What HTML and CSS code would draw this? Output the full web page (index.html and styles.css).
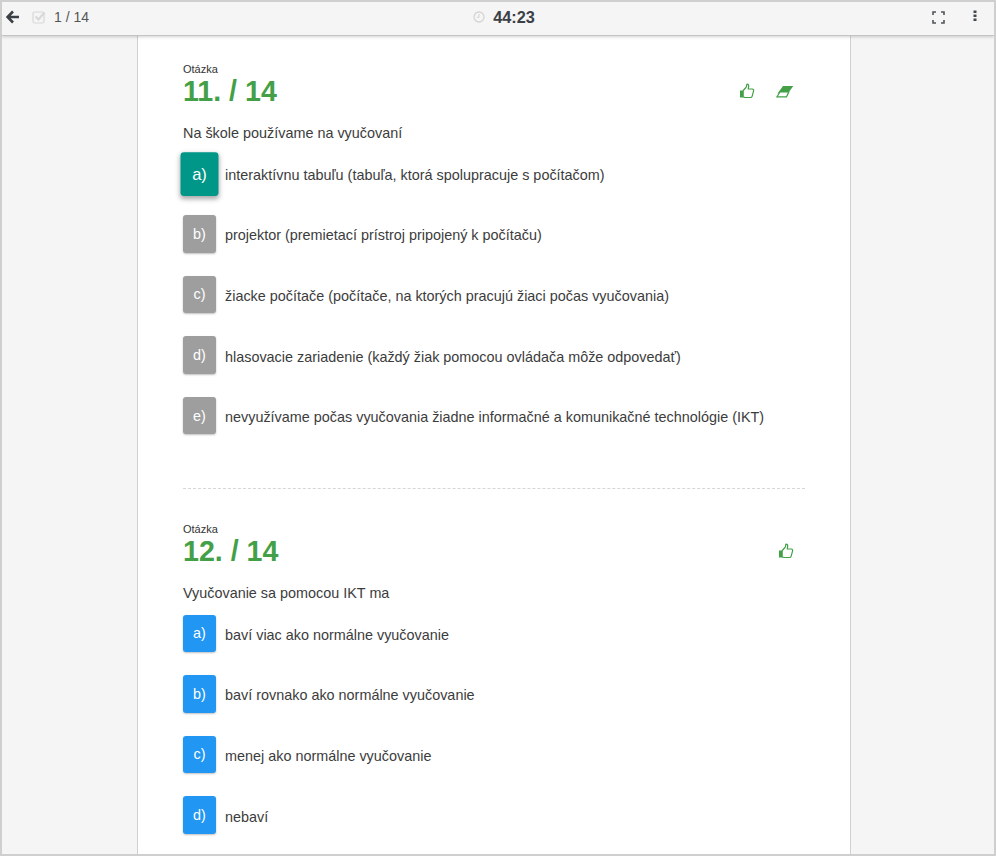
FILE: index.html
```html
<!DOCTYPE html>
<html lang="sk">
<head>
<meta charset="utf-8">
<title>Test</title>
<link rel="stylesheet" href="styles.css">
</head>
<body>
<div class="frame">
  <header class="toolbar">
    <div class="tb-left">
      <svg class="ic-back" viewBox="0 0 14 14" width="14" height="14"><path d="M7 1.500 1.500 7 7 12.500M2 7h11" fill="none" stroke="#3b3f46" stroke-width="2.600"/></svg>
      <svg class="ic-check" viewBox="0 0 14 14" width="14" height="14"><rect x="1" y="2" width="11" height="11" rx="1.500" fill="none" stroke="#d8d8d8" stroke-width="1.200"/><path d="M3.500 6.500 6.500 9.500 12.500 2.500" fill="none" stroke="#d8d8d8" stroke-width="2.200"/></svg>
      <span class="count">1 / 14</span>
    </div>
    <div class="tb-center">
      <svg class="ic-clock" viewBox="0 0 12 12" width="12" height="12"><circle cx="6" cy="6" r="5" fill="none" stroke="#d4d4d4" stroke-width="1.300"/><path d="M6 3v3.300H3.800" fill="none" stroke="#d4d4d4"/></svg>
      <span class="time">44:23</span>
    </div>
    <div class="tb-right">
      <svg class="ic-full" viewBox="0 0 13 13" width="13" height="13"><path d="M1 4V1h3M9 1h3v3M12 9v3H9M4 12H1V9" fill="none" stroke="#50555c" stroke-width="1.600"/></svg>
      <svg class="ic-more" viewBox="0 0 4 12" width="4" height="12"><path d="M.5.500h3v2.500h-3zM.5 4.500h3V7h-3zM.5 8.500h3V11h-3z" fill="#444950"/></svg>
    </div>
  </header>
  <div class="stage">
    <main class="sheet">
      <section class="question">
        <div class="q-head">
          <div>
            <div class="q-label">Otázka</div>
            <div class="q-num">11. / 14</div>
          </div>
          <div class="q-tools">
            <svg class="ic-thumb" viewBox="0 0 16 16" width="16" height="16"><path d="M1 7.500h3.200v7H1z" fill="#43a047"/><path d="M4.200 7.500 7 4.500c.7-1 .6-2.300.9-3.300.9-.3 2 .5 1.800 2L9.300 6h4c1 0 1.600 1 1.300 1.900l-1.500 5.400c-.2.700-.8 1.200-1.500 1.200H6.500c-.8 0-1.500-.3-2.300-.6z" fill="#fff" stroke="#43a047" stroke-width="1.200"/></svg>
            <svg class="ic-eraser" viewBox="0 0 18 13" width="18" height="13"><path d="M7 1H17.300L11.800 8.500H1.500z" fill="#43a047"/><path d="M4 7H12.800L10.500 11.800H1z" fill="#fff" stroke="#43a047" stroke-width="1.200"/></svg>
          </div>
        </div>
        <p class="q-text">Na škole používame na vyučovaní</p>
        <ul class="options">
          <li class="option"><span class="key key-selected">a)</span><span class="opt-text">interaktívnu tabuľu (tabuľa, ktorá spolupracuje s počítačom)</span></li>
          <li class="option"><span class="key key-grey">b)</span><span class="opt-text">projektor (premietací prístroj pripojený k počítaču)</span></li>
          <li class="option"><span class="key key-grey">c)</span><span class="opt-text">žiacke počítače (počítače, na ktorých pracujú žiaci počas vyučovania)</span></li>
          <li class="option"><span class="key key-grey">d)</span><span class="opt-text">hlasovacie zariadenie (každý žiak pomocou ovládača môže odpovedať)</span></li>
          <li class="option"><span class="key key-grey">e)</span><span class="opt-text">nevyužívame počas vyučovania žiadne informačné a komunikačné technológie (IKT)</span></li>
        </ul>
      </section>
      <section class="question question-next">
        <div class="q-head">
          <div>
            <div class="q-label">Otázka</div>
            <div class="q-num">12. / 14</div>
          </div>
          <div class="q-tools">
            <svg class="ic-thumb" viewBox="0 0 16 16" width="16" height="16"><path d="M1 7.500h3.200v7H1z" fill="#43a047"/><path d="M4.200 7.500 7 4.500c.7-1 .6-2.300.9-3.300.9-.3 2 .5 1.800 2L9.300 6h4c1 0 1.600 1 1.300 1.900l-1.500 5.400c-.2.700-.8 1.200-1.500 1.200H6.500c-.8 0-1.500-.3-2.300-.6z" fill="#fff" stroke="#43a047" stroke-width="1.200"/></svg>
          </div>
        </div>
        <p class="q-text">Vyučovanie sa pomocou IKT ma</p>
        <ul class="options">
          <li class="option"><span class="key key-blue">a)</span><span class="opt-text">baví viac ako normálne vyučovanie</span></li>
          <li class="option"><span class="key key-blue">b)</span><span class="opt-text">baví rovnako ako normálne vyučovanie</span></li>
          <li class="option"><span class="key key-blue">c)</span><span class="opt-text">menej ako normálne vyučovanie</span></li>
          <li class="option"><span class="key key-blue">d)</span><span class="opt-text">nebaví</span></li>
        </ul>
      </section>
    </main>
  </div>
</div>
</body>
</html>
```
FILE: styles.css
```css
* { box-sizing: border-box; }
html, body { margin: 0; padding: 0; }
body {
  width: 996px;
  height: 856px;
  overflow: hidden;
  font-family: "Liberation Sans", Arial, sans-serif;
  color: #3c3c3c;
  background: #f5f5f5;
}
.frame {
  width: 996px;
  height: 856px;
  display: flex;
  flex-direction: column;
  border: 2px solid #cfcfcf;
  overflow: hidden;
}
.toolbar {
  flex: none;
  height: 34px;
  padding-bottom: 3px;
  display: grid;
  grid-template-columns: 1fr auto 1fr;
  align-items: center;
  background: #f5f5f5;
  border-bottom: 1px solid #c4c4c4;
  box-shadow: 0 1px 3px rgba(0,0,0,.18);
  position: relative;
  z-index: 2;
}
.tb-left { display: flex; align-items: center; padding-left: 4px; }
.ic-back { margin-right: 12px; }
.ic-check { margin-right: 8px; }
.count { font-size: 14px; color: #555; }
.tb-center { display: flex; align-items: center; gap: 8px; padding-left: 12px; }
.time { font-size: 16.3px; font-weight: 700; color: #3b3f46; }
.tb-right { display: flex; align-items: center; justify-content: flex-end; padding-right: 17px; gap: 28px; }
.ic-more { margin-bottom: 2px; }
.stage {
  flex: 1;
  min-height: 0;
  padding-left: 135px;
  overflow: hidden;
}
.sheet {
  width: 714px;
  height: 100%;
  padding: 0 45px;
  background: #fff;
  border-left: 1px solid #d0d0d0;
  border-right: 1px solid #d0d0d0;
}
.question { padding-top: 27px; height: 452px; }
.question-next { border-top: 1px dashed #d6d6d6; padding-top: 34px; height: auto; }
.q-head { display: flex; justify-content: space-between; align-items: flex-end; }
.q-label { font-size: 11px; line-height: 12px; color: #333; }
.q-num { font-size: 28.6px; line-height: 32px; margin-bottom: 2px; font-weight: 700; color: #43a047; }
.q-tools { display: flex; align-items: center; gap: 21px; padding-right: 11px; padding-bottom: 10px; }
.q-text { margin: 14px 0 0; font-size: 14.4px; line-height: 20px; color: #3c3c3c; }
.options { list-style: none; margin: 13px 0 0; padding: 0; }
.option { display: flex; align-items: center; gap: 9px; height: 37.5px; margin-top: 23.1px; font-size: 14.4px; }
.option:first-child { margin-top: 0; }
.key {
  flex: none;
  width: 33px;
  height: 37.5px;
  margin-bottom: 3px;
  border-radius: 3px;
  display: flex;
  align-items: center;
  justify-content: center;
  color: #fff;
  font-size: 14.4px;
  box-shadow: 0 1px 2px rgba(0,0,0,.25);
}
.key-grey { background: #9e9e9e; }
.key-blue { background: #2196f3; }
.key-selected { background: #009688; transform: scale(1.15); box-shadow: 0 2px 5px rgba(0,0,0,.35); }
.opt-text { color: #3c3c3c; }
```
